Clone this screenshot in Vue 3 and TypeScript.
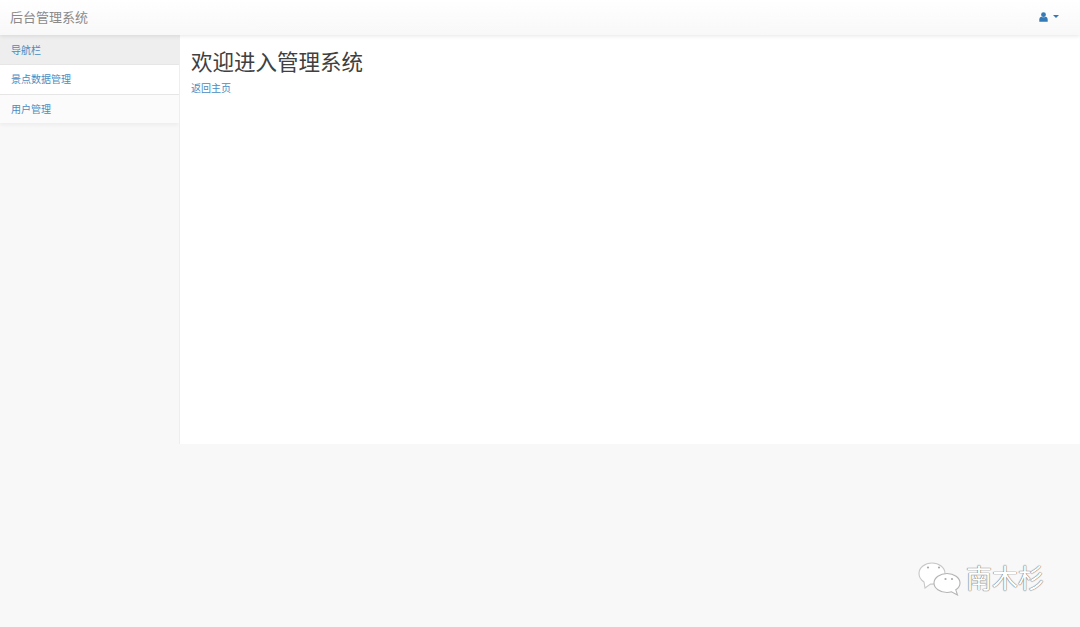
<template>
  <div class="page">
    <nav class="navbar">
      <a class="brand">后台管理系统</a>
      <a class="user-menu">
        <svg class="user-icon" viewBox="0 0 9 10" fill="currentColor">
          <circle cx="4.500" cy="2.700" r="2.400" />
          <path d="M0.300 9.700V7.400C0.300 6 1.300 5 2.500 4.800C3.700 5.500 5.300 5.500 6.500 4.800C7.700 5 8.700 6 8.700 7.400V9.700Z" />
        </svg>
        <span class="caret"></span>
      </a>
    </nav>
    <div class="body-row">
      <aside class="sidebar">
        <ul class="side-list">
          <li v-for="(item, i) in menuItems" :key="item" class="side-item" :class="{ head: i === 0 }">{{ item }}</li>
        </ul>
      </aside>
      <main class="content">
        <h1 class="title">欢迎进入管理系统</h1>
        <a class="back-link">返回主页</a>
      </main>
    </div>
    <div class="watermark">
      <svg class="wechat" viewBox="0 0 43 34">
        <path d="M14 1C7 1 1 5.500 1 11.500C1 15 3 18 6 20L7 26L12.500 22C13.200 22.100 13.500 22.100 14 22.100C21 22.100 27 17.500 27 11.500C27 5.500 21 1 14 1Z" fill="#fff" stroke="#c8c8c8" stroke-width="1.100" />
        <path d="M29 11.500C22 11.500 16 15.700 16 21C16 26.300 22 30.500 29 30.500C30.500 30.500 32 30.300 33.400 29.800L39.500 33L37.800 27.800C40.400 26 42 23.700 42 21C42 15.700 36 11.500 29 11.500Z" fill="#fff" stroke="#b4b4b4" stroke-width="1.100" />
        <circle cx="10" cy="5.500" r="1.100" fill="#aaa" />
        <circle cx="21" cy="5.500" r="1.100" fill="#aaa" />
        <circle cx="27.500" cy="17" r="1.100" fill="#aaa" />
        <circle cx="34" cy="17" r="1.100" fill="#aaa" />
      </svg>
      <span class="wm-text">南木杉</span>
    </div>
  </div>
</template>

<script setup lang="ts">
const menuItems: string[] = ['导航栏', '景点数据管理', '用户管理']
</script>

<style>
html,
body {
  margin: 0;
  background: #f8f8f8;
}
</style>

<style scoped>
.page {
  position: relative;
  height: 627px;
  overflow: hidden;
  background: #f8f8f8;
  font-family: "Liberation Sans", "Noto Sans CJK SC", sans-serif;
  color: #333;
}

.navbar {
  position: relative;
  z-index: 2;
  height: 35px;
  box-sizing: border-box;
  padding: 0 21px 2px 10px;
  display: flex;
  align-items: center;
  justify-content: space-between;
  background: linear-gradient(to bottom, #fff 0%, #f8f8f8 100%);
  box-shadow: 0 1px 4px rgba(0, 0, 0, 0.1);
}

.brand {
  padding-bottom: 1px;
  font-size: 13px;
  color: #8a8a8a;
}

.user-menu {
  display: flex;
  align-items: center;
  gap: 5px;
  color: #337ab7;
}

.user-icon {
  width: 9px;
  height: 10px;
}

.caret {
  width: 0;
  height: 0;
  border-top: 3px solid #337ab7;
  border-left: 3px solid transparent;
  border-right: 3px solid transparent;
}

.body-row {
  display: flex;
  align-items: flex-start;
}

.sidebar {
  width: 179px;
  flex-shrink: 0;
}

.side-list {
  list-style: none;
  margin: 0;
  padding: 0;
  box-shadow: 0 2px 4px rgba(0, 0, 0, 0.05);
}

.side-item {
  height: 30px;
  box-sizing: border-box;
  padding: 0 0 2px 11px;
  display: flex;
  align-items: center;
  font-size: 10px;
  color: #4a8bc2;
  background: #fff;
  border-bottom: 1px solid #e6e6e6;
}

.side-item:last-child {
  height: 28px;
  padding-bottom: 2px;
  border-bottom: none;
  background: #fbfbfb;
}

.side-item.head {
  padding-bottom: 0;
  background: #eee;
}

.content {
  flex: 1;
  height: 409px;
  box-sizing: border-box;
  padding: 15px 11px 0;
  background: #fff;
  border-left: 1px solid #eee;
}

.title {
  margin: 0 0 6px;
  font-size: 21.500px;
  font-weight: 400;
  line-height: 26px;
  color: #404040;
}

.back-link {
  display: block;
  font-size: 10px;
  line-height: 14px;
  color: #4a8bc2;
}

.watermark {
  position: absolute;
  left: 918px;
  top: 562px;
  display: flex;
  align-items: center;
  gap: 5px;
}

.wechat {
  width: 43px;
  height: 34px;
}

.wm-text {
  font-size: 26px;
  line-height: 34px;
  color: #fff;
  text-shadow: 0 0 1px #444, 0 0 1px #777;
}
</style>
